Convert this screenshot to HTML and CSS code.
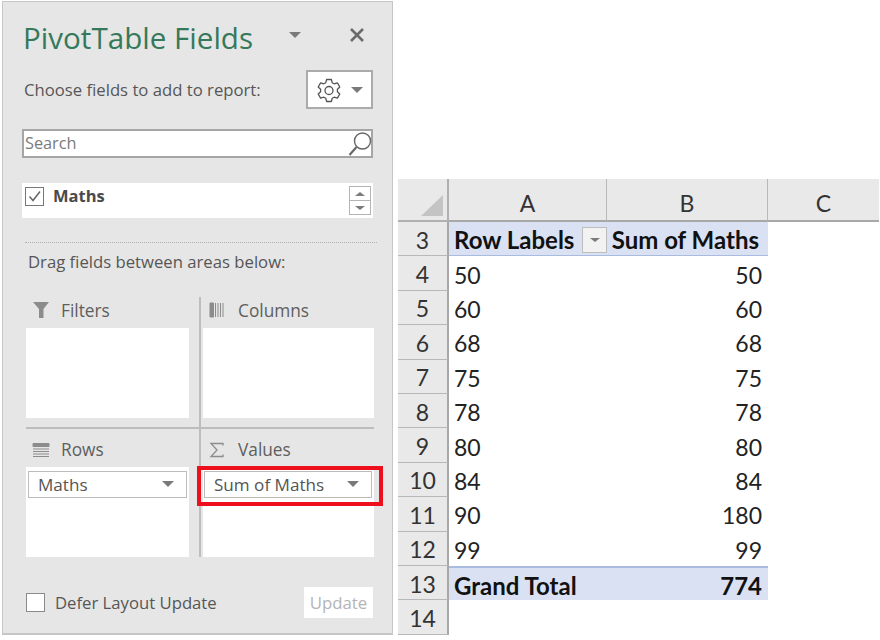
FILE: index.html
```html
<!DOCTYPE html>
<html lang="en">
<head>
    <meta charset="UTF-8">
    <title>PivotTable Fields</title>
    <link rel="stylesheet" href="styles.css">
</head>
<body>
    <div class="panel">
        <div class="title-row">
            <div class="title">PivotTable Fields</div>
            <span class="caret caret-title"></span>
            <svg class="close" width="16" height="16" viewBox="0 0 16 16"><path d="M2 2L14 14M14 2L2 14" stroke="#6a6a6a" stroke-width="2.6" fill="none"/></svg>
        </div>
        <div class="choose-row">
            <div class="label">Choose fields to add to report:</div>
            <div class="gear-btn">
                <svg width="26" height="26" viewBox="0 0 26 26"><path d="M10.6 2.5h4.8l.8 3.2 2 1.1 3.2-.9 2.4 4.1-2.4 2.3v2.4l2.4 2.3-2.4 4.1-3.2-.9-2 1.1-.8 3.2h-4.800l-.8-3.200-2-1.100-3.200.9-2.400-4.100 2.400-2.300v-2.400l-2.400-2.300 2.400-4.100 3.200.9 2-1.100z" fill="none" stroke="#555" stroke-width="1.300" stroke-linejoin="round"/><circle cx="13" cy="13.500" r="4" fill="none" stroke="#555" stroke-width="1.300"/></svg>
                <span class="caret"></span>
            </div>
        </div>
        <div class="search">
            <span>Search</span>
            <svg width="26" height="28" viewBox="0 0 26 28"><circle cx="15.500" cy="11" r="8" fill="none" stroke="#666" stroke-width="1.400"/><path d="M9.500 17L2.500 25" stroke="#666" stroke-width="2" fill="none"/></svg>
        </div>
        <div class="field-list">
            <span class="check">
                <svg width="17" height="17" viewBox="0 0 17 17"><path d="M3.500 8.500L7 12.500L14 3.500" stroke="#666" stroke-width="1.500" fill="none"/></svg>
            </span>
            <span class="field-name">Maths</span>
            <div class="spinner">
                <div class="spin-btn"><span class="tri-up"></span></div>
                <div class="spin-btn"><span class="tri-down"></span></div>
            </div>
        </div>
        <div class="dots"></div>
        <div class="label drag-label">Drag fields between areas below:</div>
        <div class="areas">
            <div class="area area-top">
                <div class="area-head">
                    <svg width="18" height="18" viewBox="0 0 18 18"><path d="M1 1H17L11.500 8V17H7V8Z" fill="#8c8c8c"/></svg>
                    <span>Filters</span>
                </div>
                <div class="area-box"></div>
            </div>
            <div class="area area-top area-right">
                <div class="area-head">
                    <svg width="16" height="16" viewBox="0 0 16 16"><path d="M1 1V15H4.500V1ZM6.500 1V15M9 1V15M11.500 1V15M14 1V15" fill="#8c8c8c" stroke="#8c8c8c"/></svg>
                    <span>Columns</span>
                </div>
                <div class="area-box"></div>
            </div>
            <div class="area area-bottom">
                <div class="area-head">
                    <svg width="18" height="16" viewBox="0 0 18 16"><path d="M1 1.500H17V4.500H1ZM1 7H17M1 9.500H17M1 12H17M1 14.500H17" fill="#8c8c8c" stroke="#8c8c8c"/></svg>
                    <span>Rows</span>
                </div>
                <div class="area-box">
                    <div class="pill">Maths<span class="caret"></span></div>
                </div>
            </div>
            <div class="area area-bottom area-right">
                <div class="area-head">
                    <svg width="16" height="16" viewBox="0 0 16 16"><path d="M14 3.500V1.500H2L8 8L2 14.500H14V12.500" fill="none" stroke="#8c8c8c" stroke-width="1.300"/></svg>
                    <span>Values</span>
                </div>
                <div class="area-box">
                    <div class="pill highlighted">Sum of Maths<span class="caret"></span></div>
                </div>
            </div>
        </div>
        <div class="footer">
            <span class="check check-empty"></span>
            <span class="label">Defer Layout Update</span>
            <div class="update-btn">Update</div>
        </div>
    </div>

    <div class="sheet">
        <div class="corner"><span class="corner-tri"></span></div>
        <div class="col-head">A</div>
        <div class="col-head">B</div>
        <div class="col-head">C</div>

        <div class="row-head">3</div>
        <div class="cell band band-top bold">Row Labels<span class="filter-btn"><span class="tri-down"></span></span></div>
        <div class="cell band band-top bold num sum-head">Sum of Maths</div>
        <div class="cell"></div>

        <div class="row-head">4</div><div class="cell">50</div><div class="cell num">50</div><div class="cell"></div>
        <div class="row-head">5</div><div class="cell">60</div><div class="cell num">60</div><div class="cell"></div>
        <div class="row-head">6</div><div class="cell">68</div><div class="cell num">68</div><div class="cell"></div>
        <div class="row-head">7</div><div class="cell">75</div><div class="cell num">75</div><div class="cell"></div>
        <div class="row-head">8</div><div class="cell">78</div><div class="cell num">78</div><div class="cell"></div>
        <div class="row-head">9</div><div class="cell">80</div><div class="cell num">80</div><div class="cell"></div>
        <div class="row-head">10</div><div class="cell">84</div><div class="cell num">84</div><div class="cell"></div>
        <div class="row-head">11</div><div class="cell">90</div><div class="cell num">180</div><div class="cell"></div>
        <div class="row-head">12</div><div class="cell">99</div><div class="cell num">99</div><div class="cell"></div>

        <div class="row-head">13</div>
        <div class="cell band band-total bold">Grand Total</div>
        <div class="cell band band-total bold num">774</div>
        <div class="cell"></div>

        <div class="row-head">14</div><div class="cell"></div><div class="cell"></div><div class="cell"></div>
    </div>
</body>
</html>
```

FILE: styles.css
```css
body {
    margin: 0;
    background-color: #ffffff;
    font-family: "Open Sans", "Noto Sans", sans-serif;
    display: flex;
    align-items: flex-start;
    overflow: hidden;
}

/* Field list panel */
.panel {
    box-sizing: border-box;
    width: 391px;
    height: 634px;
    margin: 1px 0 0 2px;
    background-color: #e6e6e6;
    border: 1px solid #c6c6c6;
    border-bottom-width: 2px;
    display: flex;
    flex-direction: column;
    flex-shrink: 0;
}
.title-row {
    display: flex;
    align-items: center;
    height: 36px;
    margin: 18px 0 0 20px;
}
.title {
    width: 266px;
    font-size: 29.6px;
    line-height: 36px;
    color: #35795a;
}
.caret {
    display: inline-block;
    width: 0;
    height: 0;
    border-left: 6px solid transparent;
    border-right: 6px solid transparent;
    border-top: 6px solid #7a7a7a;
}
.caret-title, .close {
    margin-bottom: 6px;
}
.close {
    margin-left: 48px;
}
.label {
    font-size: 16.7px;
    color: #565656;
}
.choose-row {
    display: flex;
    justify-content: space-between;
    align-items: center;
    margin: 14px 19px 0 21px;
}
.gear-btn {
    box-sizing: border-box;
    width: 67px;
    height: 39px;
    background-color: #ffffff;
    border: 2px solid #ababab;
    display: flex;
    align-items: center;
    justify-content: center;
    gap: 9px;
}
.search {
    box-sizing: border-box;
    height: 29px;
    margin: 20px 19px 0 19px;
    padding-left: 1px;
    background-color: #ffffff;
    border: 2px solid #a6a6a6;
    display: flex;
    align-items: center;
    justify-content: space-between;
    font-size: 16.3px;
    color: #7a7a7a;
}
.search span {
    margin-top: -1px;
}
.search svg {
    margin-right: -2px;
}
.field-list {
    box-sizing: border-box;
    height: 35px;
    margin: 25px 19px 0 19px;
    padding: 3px 2px 0 3px;
    background-color: #ffffff;
    display: flex;
    align-items: flex-start;
}
.check {
    box-sizing: border-box;
    width: 19px;
    height: 19px;
    margin-top: 1px;
    background-color: #ffffff;
    border: 1px solid #777777;
    display: flex;
    align-items: center;
    justify-content: center;
}
.field-name {
    margin-left: 9px;
    font-size: 16.5px;
    line-height: 20px;
    font-weight: 700;
    color: #4a4a4a;
}
.spinner {
    margin-left: auto;
    width: 22px;
}
.spin-btn {
    box-sizing: border-box;
    height: 15px;
    margin-bottom: -1px;
    border: 1px solid #b5b5b5;
    display: flex;
    align-items: center;
    justify-content: center;
}
.tri-up, .tri-down {
    display: inline-block;
    width: 0;
    height: 0;
    border-left: 5px solid transparent;
    border-right: 5px solid transparent;
}
.tri-up {
    border-bottom: 4px solid #7a7a7a;
}
.tri-down {
    border-top: 4px solid #7a7a7a;
}
.dots {
    margin: 24px 15px 0 22px;
    border-top: 1px dotted #b0b0b0;
}
.drag-label {
    margin: 7px 0 0 25px;
    line-height: 24px;
}
.areas {
    display: grid;
    grid-template-columns: 173px 175px;
    grid-template-rows: 132px 128px;
    margin: 23px 0 0 23px;
}
.area {
    box-sizing: border-box;
}
.area-top {
    border-bottom: 2px solid #bdbdbd;
}
.area-right {
    border-left: 2px solid #bdbdbd;
    padding-left: 2px;
}
.area-head {
    box-sizing: border-box;
    display: flex;
    align-items: center;
    gap: 11px;
    padding-left: 6px;
    font-size: 17.3px;
    color: #5e5e5e;
}
.area-right .area-head {
    gap: 13px;
}
.area-top .area-head {
    height: 31px;
    padding-bottom: 5px;
}
.area-bottom .area-head {
    height: 38px;
    padding-top: 3px;
}
.area-box {
    box-sizing: border-box;
    width: 163px;
    height: 90px;
    padding-top: 4px;
    background-color: #ffffff;
}
.area-right .area-box {
    width: 171px;
}
.pill {
    box-sizing: border-box;
    position: relative;
    height: 27px;
    margin: 0 2px;
    padding: 0 12px 1px 9px;
    border: 1px solid #bcbcbc;
    display: flex;
    align-items: center;
    justify-content: space-between;
    font-size: 17.1px;
    color: #555555;
}
.area-right .pill {
    margin: 0 2px 0 1px;
}
.highlighted::after {
    content: "";
    position: absolute;
    top: -6px;
    left: -8px;
    right: -12px;
    bottom: -9px;
    border: 4px solid #ee0f1c;
}
.footer {
    display: flex;
    align-items: center;
    height: 31px;
    margin: 30px 19px 0 23px;
}
.check-empty {
    margin-top: 0;
    border-color: #8a8a8a;
}
.footer .label {
    margin-left: 10px;
}
.update-btn {
    box-sizing: border-box;
    width: 69px;
    height: 31px;
    margin-left: auto;
    background-color: #ffffff;
    font-size: 16.8px;
    line-height: 31px;
    text-align: center;
    color: #b4b4b4;
}

/* Worksheet */
.sheet {
    display: grid;
    grid-template-columns: 51px 158px 161px 111px;
    grid-template-rows: 43px repeat(12, 34.4px);
    margin: 179px 0 0 5px;
    font-family: Lato, "Open Sans", sans-serif;
    font-size: 23px;
    color: #222222;
}
.corner {
    box-sizing: border-box;
    position: relative;
    background-color: #e9e9e9;
    border-right: 2px solid #b0b0b0;
    border-bottom: 2px solid #b0b0b0;
}
.corner-tri {
    position: absolute;
    right: 4px;
    bottom: 4px;
    width: 0;
    height: 0;
    border-left: 22px solid transparent;
    border-bottom: 21px solid #c4c4c4;
}
.col-head {
    box-sizing: border-box;
    padding-top: 6px;
    background-color: #e9e9e9;
    border-right: 1px solid #b8b8b8;
    border-bottom: 2px solid #a8a8a8;
    display: flex;
    align-items: center;
    justify-content: center;
    color: #333333;
}
.col-head:nth-child(4) {
    border-right: none;
}
.row-head {
    box-sizing: border-box;
    padding-top: 2px;
    background-color: #e9e9e9;
    border-right: 2px solid #a8a8a8;
    border-bottom: 1px solid #b8b8b8;
    display: flex;
    align-items: center;
    justify-content: center;
    color: #333333;
}
.cell {
    box-sizing: border-box;
    padding: 2px 6px 0 5px;
    display: flex;
    align-items: center;
    white-space: nowrap;
}
.num {
    justify-content: flex-end;
}
.bold {
    font-size: 24px;
    font-weight: 700;
    color: #111111;
}
.sum-head {
    padding-right: 9px;
}
.band {
    background-color: #d9e1f2;
}
.band-top {
    border-bottom: 1px solid #a9bce0;
}
.band-total {
    border-top: 2px solid #a9bce0;
}
.filter-btn {
    box-sizing: border-box;
    width: 25px;
    height: 26px;
    margin-left: auto;
    margin-right: -6px;
    background-color: #f2f2f2;
    border: 1px solid #bcbcbc;
    display: flex;
    align-items: center;
    justify-content: center;
}
```
